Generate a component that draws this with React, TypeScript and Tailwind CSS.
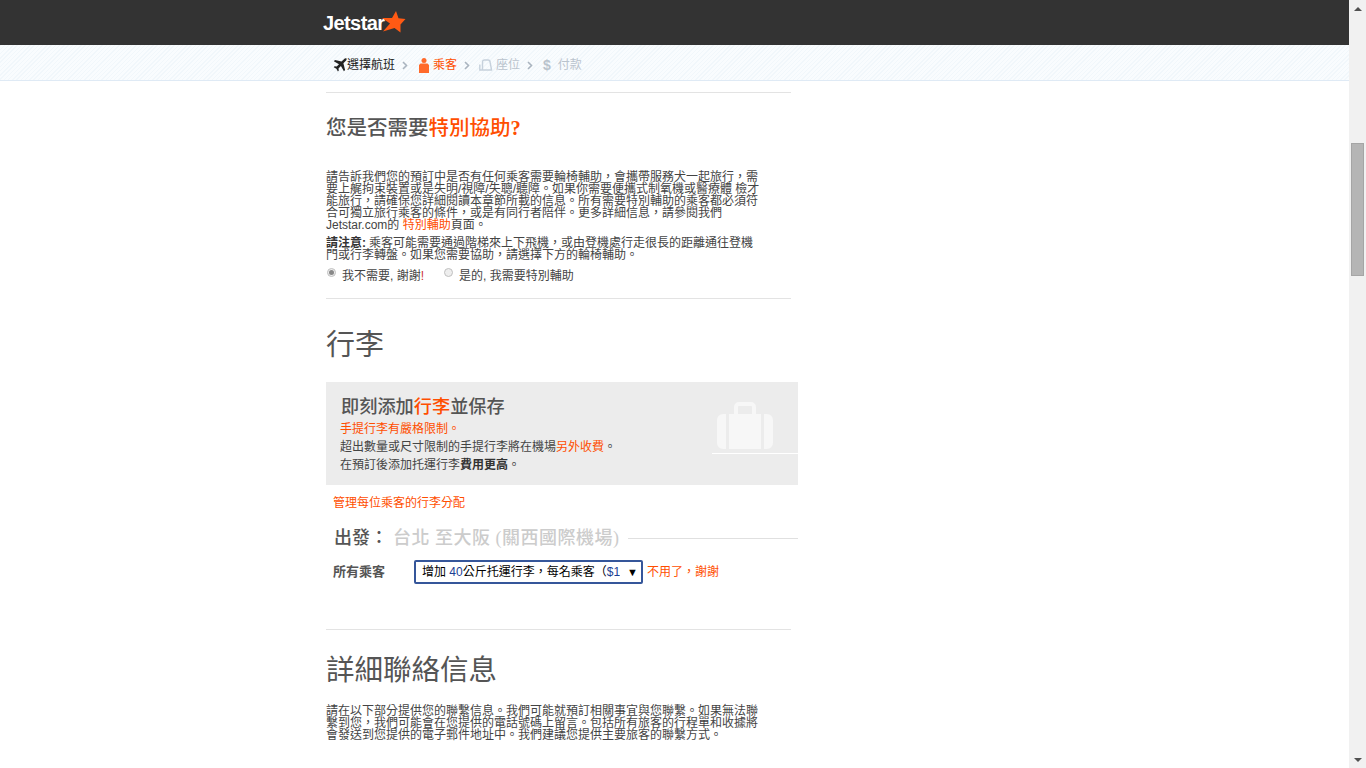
const orange = 'text-[#ff4e00]';
const bodyFont = "font-['Liberation_Sans','Noto_Sans_CJK_TC',sans-serif]";
const headFont = "font-['Liberation_Serif','Noto_Sans_CJK_TC',serif]";

function Logo() {
  return (
    <div className="flex items-center">
      <span className="font-['Liberation_Sans',sans-serif] text-[20px] font-bold leading-none tracking-[-0.6px] text-white">Jetstar</span>
      <svg width="25" height="24" viewBox="0 0 25 24" className="-ml-[3px] -mt-[1px]">
        <path d="M15 1l2.500 7.200 7 .8-5 5.500 0 8-6-4.500L2 21.500l7-8L1 8h10z" fill="#ff5a14" />
      </svg>
    </div>
  );
}

function Chevron() {
  return (
    <svg width="6" height="9" viewBox="0 0 6 9" className="mx-[7px]">
      <path d="M1 1l3.500 3.500L1 8" fill="none" stroke="#a9b4bf" strokeWidth="1.600" />
    </svg>
  );
}

function Steps() {
  return (
    <div className={`flex items-center pl-[333px] pt-[5px] text-[12px] ${bodyFont}`}>
      <svg width="14" height="14" viewBox="0 0 14 14">
        <path d="M13.500.5c-.8-.4-2 .1-2.800.9L8.500 3.600 2 2 .8 3.200l5.200 3L3.600 8.600 1.600 8.300.7 9.200l2.700 1.500 1.500 2.700.9-.9-.3-2 2.400-2.400 3 5.200 1.200-1.200L10.400 5.300l2.200-2.200c.8-.8 1.300-2 .9-2.600z" fill="#222" />
      </svg>
      <span className="text-[#222]">選擇航班</span>
      <Chevron />
      <svg width="10" height="15" viewBox="0 0 10 15" className="ml-[4px] mr-[4px]">
        <circle cx="5" cy="2.500" r="2.500" fill="#ff6a2b" />
        <path d="M1.500 5.500h7L10 7v8H0V7z" fill="#ff6a2b" />
      </svg>
      <span className={orange}>乘客</span>
      <Chevron />
      <svg width="14" height="12" viewBox="0 0 14 12" className="ml-[2px] mr-[3px]">
        <path d="M3.500 10.500V3a2 2 0 0 1 2-2h3.500a2 2 0 0 1 2 2l1.500 7.500M.8 5.500v5.500h12.400" fill="none" stroke="#c6d1dc" strokeWidth="1.400" />
      </svg>
      <span className="text-[#b9c3cd]">座位</span>
      <Chevron />
      <span className="ml-[3px] mr-[7px] text-[14px] font-bold leading-none text-[#b9c3cd]">$</span>
      <span className="text-[#b9c3cd]">付款</span>
    </div>
  );
}

function Radio({ checked }: { checked?: boolean }) {
  return (
    <span className="flex h-[9px] w-[9px] items-center justify-center rounded-full border border-[#c0c0c0] bg-[#eee]">
      {checked && <span className="h-[5px] w-[5px] rounded-full bg-[#888]" />}
    </span>
  );
}

function Suitcase() {
  return (
    <svg width="58" height="48" viewBox="0 0 58 48" className="absolute left-[390px] top-[20px]">
      <path d="M20 12V5a3 3 0 0 1 3-3h12a3 3 0 0 1 3 3v7" fill="none" stroke="#f7f7f7" strokeWidth="4" />
      <path d="M7 12h3v35H7a6 6 0 0 1-6-6V18a6 6 0 0 1 6-6zM13 12h32v35H13zM48 12h3a6 6 0 0 1 6 6v23a6 6 0 0 1-6 6h-3z" fill="#f7f7f7" />
    </svg>
  );
}

function Scrollbar() {
  return (
    <div className="flex h-[768px] w-[17px] shrink-0 flex-col items-center bg-[#f1f1f1]">
      <div className="flex h-[17px] w-full items-center justify-center">
        <span className="h-0 w-0 border-x-[4px] border-b-[4px] border-x-transparent border-b-[#505050]" />
      </div>
      <div className="mt-[126px] h-[133px] w-[13px] border border-[#a5a5a5] bg-[#b5b5b5]" />
      <div className="flex-1" />
      <div className="flex h-[17px] w-full items-center justify-center">
        <span className="h-0 w-0 border-x-[4px] border-t-[4px] border-x-transparent border-t-[#505050]" />
      </div>
    </div>
  );
}

export default function App() {
  return (
    <div className={`flex h-[768px] w-[1366px] overflow-hidden bg-white ${bodyFont}`}>
      <main className="h-[768px] w-[1349px] overflow-hidden">
        <header className="flex h-[45px] items-center bg-[#333] pl-[323px]">
          <Logo />
        </header>
        <nav className="flex h-[36px] items-center border-b border-[#dfeaf5] bg-[repeating-linear-gradient(135deg,#f1f7fb_0,#f1f7fb_1px,#f9fcfe_1px,#f9fcfe_3px)]">
          <Steps />
        </nav>

        <div className="ml-[326px] w-[472px] pt-[11px] text-[#4b4b4b]">
          <hr className="w-[465px] border-[#e3e3e3]" />

          <h2 className={`mt-[22px] text-[20.500px] font-medium leading-[26px] text-[#555] ${headFont}`}>
            您是否需要<span className={orange}>特別協助<span className="font-bold">?</span></span>
          </h2>

          <p className="mt-[30px] w-[434px] text-[12px] leading-[12px] text-[#444]">
            請告訴我們您的預訂中是否有任何乘客需要輪椅輔助，會攜帶服務犬一起旅行，需<br />
            要上艉拘束裝置或是失明/視障/失聰/聽障。如果你需要便攜式制氧機或醫療體 檢才<br />
            能旅行，請確保您詳細閱讀本章節所載的信息。所有需要特別輔助的乘客都必須符<br />
            合可獨立旅行乘客的條件，或是有同行者陪伴。更多詳細信息，請參閱我們<br />
            Jetstar.com的 <span className={orange}>特別輔助</span>頁面。
          </p>
          <p className="mt-[6px] w-[434px] text-[12px] leading-[12px] text-[#444]">
            <strong className="mr-[3px] text-[#333]">請注意:</strong>乘客可能需要通過階梯來上下飛機，或由登機處行走很長的距離通往登機<br />
            門或行李轉盤。如果您需要協助，請選擇下方的輪椅輔助。
          </p>
          <div className="mt-[8px] flex items-center text-[12px] leading-[14px] text-[#444]">
            <span className="-mt-[7px] ml-[1px]"><Radio checked /></span>
            <span className="ml-[6px]">我不需要, 謝謝<span className="text-[#c33]">!</span></span>
            <span className="-mt-[7px] ml-[20px]"><Radio /></span>
            <span className="ml-[6px]">是的, 我需要特別輔助</span>
          </div>

          <hr className="mt-[15px] w-[465px] border-[#e3e3e3]" />

          <h2 className={`mt-[29px] text-[29px] leading-[34px] text-[#555] ${headFont}`}>行李</h2>

          <section className="relative mt-[20px] h-[103px] w-[472px] bg-[#ececec] pl-[14px] pt-[14px]">
            <Suitcase />
            <div className="absolute left-[386px] top-[71px] h-px w-[86px] bg-white" />
            <h3 className={`ml-[1px] text-[18.200px] font-medium leading-[22px] text-[#555] ${headFont}`}>
              即刻添加<span className={orange}>行李</span>並保存
            </h3>
            <p className={`mt-[2px] text-[12px] leading-[18px] ${orange}`}>手提行李有嚴格限制。</p>
            <p className="text-[12px] leading-[18px] text-[#444]">
              超出數量或尺寸限制的手提行李將在機場<span className={orange}>另外收費</span>。
            </p>
            <p className="text-[12px] leading-[18px] text-[#444]">
              在預訂後添加托運行李<strong className="text-[#333]">費用更高</strong>。
            </p>
          </section>

          <a className={`ml-[7px] mt-[10px] block text-[12px] leading-[16px] ${orange}`}>管理每位乘客的行李分配</a>

          <div className="mt-[15px] flex items-center pl-[8px]">
            <h3 className={`text-[18px] font-medium leading-[24px] text-[#555] ${headFont}`}>出發：</h3>
            <span className={`ml-[5px] text-[18px] font-medium leading-[24px] tracking-[0.5px] text-[#ccc] ${headFont}`}>台北 至大阪 (關西國際機場)</span>
            <div className="ml-[8px] h-px flex-1 bg-[#e0e0e0]" />
          </div>

          <div className="mt-[10px] flex items-center pl-[7px] text-[12px]">
            <span className="w-[81px] text-[13px] font-bold text-[#555]">所有乘客</span>
            <div className="flex h-[24px] w-[229px] items-center justify-between rounded-[2px] border-2 border-[#35569a] pl-[6px] pr-[3px] text-black">
              <span className="overflow-hidden whitespace-nowrap">增加 <span className="text-[#1c3f94]">40</span>公斤托運行李，每名乘客（<span className="text-[#1c3f94]">$1</span></span>
              <span className="text-[11px] leading-none">▼</span>
            </div>
            <a className={`ml-[4px] ${orange}`}>不用了，謝謝</a>
          </div>

          <hr className="mt-[45px] w-[465px] border-[#e3e3e3]" />

          <h2 className={`mt-[24px] text-[28.500px] leading-[34px] text-[#555] ${headFont}`}>詳細聯絡信息</h2>

          <p className="mt-[17px] w-[434px] text-[12px] leading-[12px] text-[#444]">
            請在以下部分提供您的聯繫信息。我們可能就預訂相關事宜與您聯繫。如果無法聯<br />
            繫到您，我們可能會在您提供的電話號碼上留言。包括所有旅客的行程單和收據將<br />
            會發送到您提供的電子郵件地址中。我們建議您提供主要旅客的聯繫方式。
          </p>
        </div>
      </main>
      <Scrollbar />
    </div>
  );
}
